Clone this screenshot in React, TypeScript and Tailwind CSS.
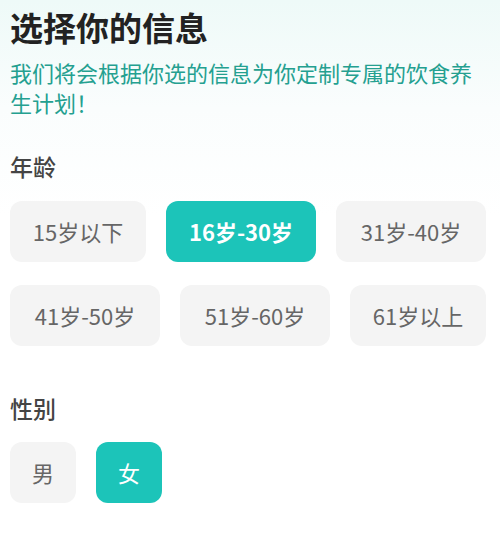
import React, { useState } from 'react';

const ages = [
  { label: '15岁以下', width: 'w-[136px]' },
  { label: '16岁-30岁', width: 'w-[150px]' },
  { label: '31岁-40岁', width: 'w-[150px]' },
  { label: '41岁-50岁', width: 'w-[150px]' },
  { label: '51岁-60岁', width: 'w-[150px]' },
  { label: '61岁以上', width: 'w-[136px]' },
];
const genders = ['男', '女'];

const Option: React.FC<{ label: string; width: string; active: boolean; bold?: boolean; onClick: () => void }> = ({
  label,
  width,
  active,
  bold,
  onClick,
}) => (
  <button
    onClick={onClick}
    className={`${width} h-[61px] rounded-[12px] text-[22px] flex items-center justify-center ${
      active ? 'bg-[#1cc4b9] text-white' : 'bg-[#f4f4f4] text-[#666666]'
    } ${active && bold ? 'font-bold' : 'font-normal'}`}
  >
    {label}
  </button>
);

const App: React.FC = () => {
  const [age, setAge] = useState('16岁-30岁');
  const [gender, setGender] = useState('女');

  return (
    <div
      className="min-h-[541px] w-[500px] bg-gradient-to-b from-[#eefaf8] via-[#fafdfd] via-[20%] to-white to-[40%] px-[10px] pt-[5px]"
      style={{ fontFamily: '"Noto Sans CJK SC", "Noto Sans", sans-serif' }}
    >
      {/* Header */}
      <h1 className="text-[33px] leading-[44px] font-bold text-[#222222]">选择你的信息</h1>
      <p className="mt-[8px] text-[22px] leading-[30px] text-[#24a090]">
        我们将会根据你选的信息为你定制专属的饮食养生计划！
      </p>

      {/* Age */}
      <h2 className="mt-[34px] text-[23px] leading-[30px] font-medium text-[#444444]">年龄</h2>
      <div className="mt-[20px] flex flex-wrap gap-x-[20px] gap-y-[23px]">
        {ages.map((a) => (
          <Option key={a.label} label={a.label} width={a.width} bold active={age === a.label} onClick={() => setAge(a.label)} />
        ))}
      </div>

      {/* Gender */}
      <h2 className="mt-[47px] text-[23px] leading-[30px] font-medium text-[#444444]">性别</h2>
      <div className="mt-[19px] flex gap-[20px]">
        {genders.map((g) => (
          <Option key={g} label={g} width="w-[66px]" active={gender === g} onClick={() => setGender(g)} />
        ))}
      </div>
    </div>
  );
};

export default App;
